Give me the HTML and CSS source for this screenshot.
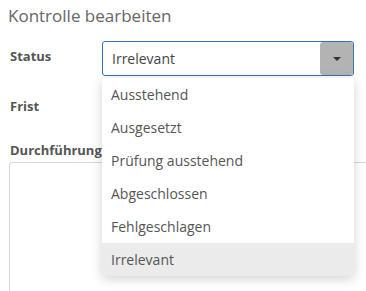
FILE: index.html
```html
<!DOCTYPE html>
<html lang="de">
<head>
    <meta charset="UTF-8">
    <title>Kontrolle bearbeiten</title>
    <link rel="stylesheet" href="styles.css">
</head>
<body>
    <div class="panel">
        <h2 class="title">Kontrolle bearbeiten</h2>
        <div class="row">
            <label class="label">Status</label>
            <div class="select-wrap">
                <div class="select">
                    <span class="value">Irrelevant</span>
                    <span class="btn"><span class="caret"></span></span>
                </div>
                <ul class="menu">
                    <li>Ausstehend</li>
                    <li>Ausgesetzt</li>
                    <li>Prüfung ausstehend</li>
                    <li>Abgeschlossen</li>
                    <li>Fehlgeschlagen</li>
                    <li class="active">Irrelevant</li>
                </ul>
            </div>
        </div>
        <div class="row frist">
            <label class="label">Frist</label>
        </div>
        <label class="label block">Durchführung</label>
        <div class="textarea"></div>
    </div>
</body>
</html>
```

FILE: styles.css
```css
body {
    margin: 0;
    overflow: hidden;
    font-family: "Open Sans", sans-serif;
    background: #fff;
}

.panel {
    padding: 0 0 0 8px;
}

.title {
    margin: 0;
    padding-top: 3px;
    font-size: 17px;
    font-weight: normal;
    color: #666;
    line-height: 26px;
}

.row {
    display: flex;
    align-items: flex-start;
}

.row:first-of-type {
    margin-top: 12px;
}

.label {
    display: block;
    width: 92px;
    padding-left: 2px;
    font-size: 13px;
    font-weight: bold;
    color: #555;
    line-height: 18px;
    padding-top: 6px;
}

.select-wrap {
    position: relative;
    width: 252px;
}

.select {
    height: 33px;
    border: 1px solid #3b6fb6;
    border-radius: 3px;
    display: flex;
    align-items: center;
    justify-content: space-between;
}

.value {
    font-size: 14px;
    color: #444;
    padding-left: 9px;
}

.btn {
    width: 33px;
    height: 33px;
    background: #b3b3b3;
    border-radius: 3px;
    display: flex;
    align-items: center;
    justify-content: center;
}

.caret {
    width: 0;
    height: 0;
    border-left: 4px solid transparent;
    border-right: 4px solid transparent;
    border-top: 4px solid #333;
}

.menu {
    position: absolute;
    top: 37px;
    left: 0;
    width: 252px;
    margin: 0;
    padding: 0;
    list-style: none;
    background: #fff;
    border-radius: 4px;
    box-shadow: 0 3px 12px rgba(0, 0, 0, 0.18);
    z-index: 2;
}

.menu li {
    height: 33px;
    line-height: 33px;
    padding-left: 9px;
    font-size: 14px;
    color: #555;
}

.menu li.active {
    background: #ebebeb;
    border-radius: 0 0 4px 4px;
}

.frist {
    margin-top: 15px;
}

.label.block {
    width: auto;
    margin-top: 26px;
    padding-top: 0;
}

.textarea {
    margin-top: 3px;
    margin-left: 1px;
    height: 130px;
    border: 1px solid #d6d6d6;
    border-right: none;
    border-bottom: none;
    border-radius: 3px 0 0 0;
}
```
